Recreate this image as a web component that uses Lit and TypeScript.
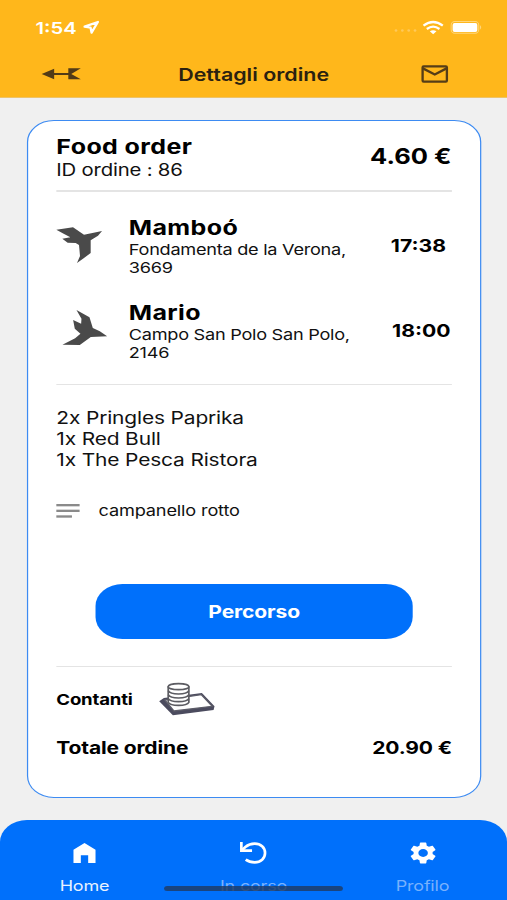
import { LitElement, html, css, svg } from "lit";
import { customElement, property } from "lit/decorators.js";

// Icons use preserveAspectRatio="none" because the whole screen is stretched horizontally.
const icon = (name: string, viewBox: string, body: unknown) =>
  html`<svg class="icon ${name}" viewBox=${viewBox} preserveAspectRatio="none">${body}</svg>`;

const shared = css`
  * { box-sizing: border-box; }
  .icon { display: block; flex: none; overflow: visible; }
  .t { white-space: nowrap; display: block; }
`;

const birdDown = svg`<path fill="#4a4a4a" d="M108 359L158 352L191 374L245 363L233 377L211 391L211 429L191 444L170 459L179 438L176 405L166 399L142 398L126 386L150 382L130 371Z"/>`;
const birdUp = svg`<path fill="#4a4a4a" d="M108 50L147 72L157 104L178 114L200 129L151 131L118 155L66 154L104 135L120 121L103 106L98 80L122 91L123 76Z"/>`;

@customElement("order-stop")
export class OrderStop extends LitElement {
  @property() name = "";
  @property() street = "";
  @property() civic = "";
  @property() time = "";
  @property() kind = "pickup";

  static styles = [shared, css`
    :host { display: flex; height: 64px; }
    .art { width: 59.2px; flex: none; }
    .pickup { width: 37.3px; height: 36px; margin-top: 11px; }
    .dropoff { width: 36.5px; height: 35px; margin: 9.5px 0 0 4.5px; }
    .info { flex: 1; }
    .name { font-size: 20.4px; font-weight: 700; line-height: 25px; letter-spacing: 0.32px; margin-top: -1px; color: #000; }
    .addr { font-size: 14.8px; line-height: 18px; letter-spacing: -0.21px; }
    .name + .addr { margin-top: 1px; }
    .time { font-size: 17.3px; font-weight: 700; line-height: 20px; margin-top: 20.6px; color: #000; }
    .time.pickup-time { margin-right: 4.8px; }
    .time.dropoff-time { margin-right: 1.1px; }
  `];

  render() {
    const pickup = this.kind === "pickup";
    return html`
      <div class="art">
        ${pickup ? icon("pickup", "108 351 137 108", birdDown) : icon("dropoff", "66 50 134 105", birdUp)}
      </div>
      <div class="info">
        <span class="t name">${this.name}</span>
        <span class="t addr">${this.street}</span>
        <span class="t addr">${this.civic}</span>
      </div>
      <span class="t time ${this.kind}-time">${this.time}</span>
    `;
  }
}

@customElement("app-root")
export class AppRoot extends LitElement {
  static styles = [shared, css`
    :host { display: block; width: 507px; height: 900px; overflow: hidden; }
    .screen {
      width: 414px; height: 900px; display: flex; flex-direction: column; position: relative;
      transform: scaleX(1.22464); transform-origin: 0 0;
      background: #f0f0f0; color: #111; font-family: Inter, "Liberation Sans", sans-serif;
    }
    .header { height: 98px; flex: none; background: #ffb71b; border-bottom: 1px solid #edc36a; }
    .status { height: 54px; display: flex; align-items: center; padding: 2px 21px 0 29px; color: #fff; }
    .clock { font-size: 16.5px; font-weight: 600; width: 38.5px; }
    .loc { width: 13px; height: 13.3px; }
    .right { margin-left: auto; display: flex; align-items: center; }
    .dots { width: 18px; height: 3px; margin: 6px 5px 0 0; }
    .wifi { width: 17.4px; height: 13.3px; margin-top: -1.5px; }
    .battery { width: 26px; height: 12.7px; margin-left: 6px; margin-right: -1px; margin-top: -1px; }
    .bar { height: 40px; display: flex; align-items: center; padding: 0 48px 0 33.5px; }
    .back { width: 32px; height: 12px; }
    .title { flex: 1; padding-left: 80px; font-size: 17.5px; font-weight: 600; color: #2b2110; }
    .mail { width: 22px; height: 18px; }

    .card {
      width: 371px; height: 678px; margin: 21.5px 0 0 22px; flex: none; background: #fff;
      border: 1px solid #3d8bf2; border-radius: 22px; padding: 13.5px 23px 0 23px;
    }
    .rule { height: 1.5px; background: #e4e4e4; }
    .head { display: flex; justify-content: space-between; height: 56px; }
    .kind { font-size: 20.4px; font-weight: 700; line-height: 25px; color: #000; letter-spacing: 0.33px; }
    .oid { font-size: 16.6px; line-height: 21px; letter-spacing: -0.16px; padding-top: 0.6px; }
    .fee { font-size: 20.8px; font-weight: 700; line-height: 24px; margin-top: 11px; color: #000; padding-right: 0.4px; }
    .stops { padding-top: 24px; height: 192px; display: flex; flex-direction: column; gap: 21px; color: #111; }
    .items { padding-top: 22px; font-size: 17.1px; line-height: 21px; letter-spacing: -0.13px; }
    .note { display: flex; align-items: center; margin-top: 31px; height: 20px; font-size: 14.8px; letter-spacing: -0.12px; }
    .lines { width: 19px; height: 14px; margin-right: 15.5px; }
    .note .t { margin-top: -1px; }
    .route {
      width: 259px; height: 55px; margin: 62.5px 0 0 32px; border: 0; border-radius: 22px;
      background: #0070fb; color: #fff; font: 700 17.2px/55px Inter, "Liberation Sans", sans-serif; padding: 0;
      display: block; text-align: center; letter-spacing: -0.1px;
    }
    .rule.last { margin-top: 27px; }
    .pay { display: flex; align-items: center; height: 36px; margin-top: 14.5px; font-size: 15.2px; font-weight: 700; color: #000; letter-spacing: -0.16px; }
    .cash { width: 45.2px; height: 32.3px; margin-left: 22px; }
    .total { display: flex; justify-content: space-between; height: 24px; line-height: 24px; margin-top: 18px;
      font-size: 17.2px; font-weight: 700; color: #000; letter-spacing: -0.14px; }

    .nav { margin-top: auto; height: 80.5px; flex: none; background: #0070fb; border-radius: 22px 22px 0 0;
      display: grid; grid-template-columns: repeat(3, 138px); justify-items: center; }
    .tab { display: flex; flex-direction: column; align-items: center; color: #78b1fd; font-size: 14.7px; line-height: 20px; letter-spacing: -0.15px; }
    .tab.active { color: #e8f2ff; }
    .glyph { height: 56px; padding-top: 11px; display: flex; align-items: center; }
    .home { width: 18px; height: 20px; }
    .undo { width: 21.8px; height: 22px; }
    .gear { width: 21px; height: 22px; }
    .indicator { position: absolute; left: 134px; top: 885.5px; width: 146px; height: 5.5px; border-radius: 3px;
      background: rgba(32, 58, 98, 0.82); }
  `];

  items = ["2x Pringles Paprika", "1x Red Bull", "1x The Pesca Ristora"];

  render() {
    return html`
      <div class="screen">
        <header class="header">
          <div class="status">
            <span class="t clock">1:54</span>
            ${icon("loc", "248 64 48 40", svg`<path d="M252 81L292 67L273 99L270 84Z" fill="none" stroke="#fff" stroke-width="7" stroke-linejoin="round"/>`)}
            <div class="right">
              ${icon("dots", "0 0 66 9", svg`<g fill="#ffc95a"><circle cx="5" cy="4.5" r="4"/><circle cx="24" cy="4.5" r="4"/><circle cx="43" cy="4.5" r="4"/><circle cx="62" cy="4.5" r="4"/></g>`)}
              ${icon("wifi", "508 61 64 40", svg`<g fill="none" stroke="#fff" stroke-width="7"><path d="M511 75Q540 53 569 75"/><path d="M521 85Q540 71 559 85"/></g><path fill="#fff" d="M530 92Q540 85 550 92L540 101Z"/>`)}
              ${icon("battery", "594 63 98 38", svg`<rect x="595.5" y="64.500" width="85" height="35" rx="11" fill="none" stroke="#ffd67c" stroke-width="3"/><rect x="600" y="69" width="76" height="27" rx="6" fill="#fff"/><path d="M684 75Q692 82 684 89Z" fill="#ffd67c"/>`)}
            </div>
          </div>
          <div class="bar">
            ${icon("back", "124 206 119 36", svg`<path fill="#523b17" d="M124 224L162 208V221H205V207H243L214 224L243 240H205V227H162V240Z"/>`)}
            <span class="t title">Dettagli ordine</span>
            ${icon("mail", "503 197 81 53", svg`<g fill="none" stroke="#553d17" stroke-width="7"><rect x="507" y="201" width="73" height="45" rx="3"/><path d="M508 207L543.500 225L579 207"/></g>`)}
          </div>
        </header>

        <section class="card">
          <div class="head">
            <div>
              <span class="t kind">Food order</span>
              <span class="t oid">ID ordine : 86</span>
            </div>
            <span class="t fee">4.60 €</span>
          </div>
          <div class="rule"></div>
          <div class="stops">
            <order-stop kind="pickup" name="Mamboó" street="Fondamenta de la Verona," civic="3669" time="17:38"></order-stop>
            <order-stop kind="dropoff" name="Mario" street="Campo San Polo San Polo," civic="2146" time="18:00"></order-stop>
          </div>
          <div class="rule"></div>
          <div class="items">${this.items.map((i) => html`<span class="t">${i}</span>`)}</div>
          <div class="note">
            ${icon("lines", "48 41 70 42", svg`<g fill="#8a8a8a"><rect x="48" y="41" width="70" height="7"/><rect x="48" y="58" width="70" height="7"/><rect x="48" y="75" width="47" height="7"/></g>`)}
            <span class="t">campanello rotto</span>
          </div>
          <button class="route">Percorso</button>
          <div class="rule last"></div>
          <div class="pay">
            <span class="t">Contanti</span>
            ${icon("cash", "420 98 166 97", svg`
              <path d="M420 153L434 143L548 128L586 168L583 179L461 195Z" fill="#4b4b5e"/>
              <path d="M437 149L546 133L579 168L464 182Z" fill="#fff" stroke="#5c5c68" stroke-width="4"/>
              <path d="M447 108V156Q452 165 478 165Q504 165 509 156V108" fill="#fff" stroke="#5c5c62" stroke-width="5"/>
              <ellipse cx="478" cy="109" rx="31" ry="9" fill="#fff" stroke="#5c5c62" stroke-width="5"/>
              <g fill="none" stroke="#5c5c62" stroke-width="5"><path d="M447 121Q452 131 478 131Q504 131 509 121"/><path d="M447 133Q452 143 478 143Q504 143 509 133"/><path d="M447 145Q452 154 478 154Q504 154 509 145"/></g>`)}
          </div>
          <div class="total"><span class="t">Totale ordine</span><span class="t">20.90 €</span></div>
        </section>

        <nav class="nav">
          <div class="tab active">
            <div class="glyph">${icon("home", "223 99 66 60", svg`<path fill="#fff" d="M223 159V119L256 99L289 119V159H267V136H245V159Z"/>`)}</div>
            <span class="t">Home</span>
          </div>
          <div class="tab">
            <div class="glyph">${icon("undo", "48 38 80 66", svg`<g fill="none" stroke="#fff" stroke-width="8"><path d="M52 38V64H84"/><path d="M53 63L64 53Q76 43 92 43C110 43 123 55 123 71S110 99 92 99Q76 99 65 91"/></g>`)}</div>
            <span class="t">In corso</span>
          </div>
          <div class="tab">
            <div class="glyph">${icon("gear", "2.300 2 19.400 20", svg`<path fill="#fff" d="M19.140 12.940c.04-.3.06-.61.06-.94 0-.32-.02-.64-.07-.94l2.030-1.580c.18-.14.23-.41.12-.61l-1.920-3.320c-.12-.22-.37-.29-.59-.22l-2.390.96c-.5-.38-1.030-.7-1.620-.94l-.36-2.540c-.04-.24-.24-.41-.48-.41h-3.840c-.24 0-.43.17-.47.41l-.36 2.540c-.59.24-1.130.57-1.620.94l-2.390-.96c-.22-.08-.47 0-.59.22L2.740 8.870c-.12.21-.08.47.12.61l2.030 1.580c-.05.3-.09.63-.09.94s.02.64.07.94l-2.030 1.580c-.18.14-.23.41-.12.61l1.920 3.320c.12.22.37.29.59.22l2.390-.96c.5.38 1.030.7 1.620.94l.36 2.540c.05.24.24.41.48.41h3.840c.24 0 .44-.17.47-.41l.36-2.540c.59-.24 1.130-.56 1.620-.94l2.390.96c.22.08.47 0 .59-.22l1.920-3.320c.12-.22.07-.47-.12-.61zM12 15.600A3.600 3.600 0 1 1 12 8.400a3.600 3.600 0 0 1 0 7.200z"/>`)}</div>
            <span class="t">Profilo</span>
          </div>
        </nav>
        <div class="indicator"></div>
      </div>
    `;
  }
}
